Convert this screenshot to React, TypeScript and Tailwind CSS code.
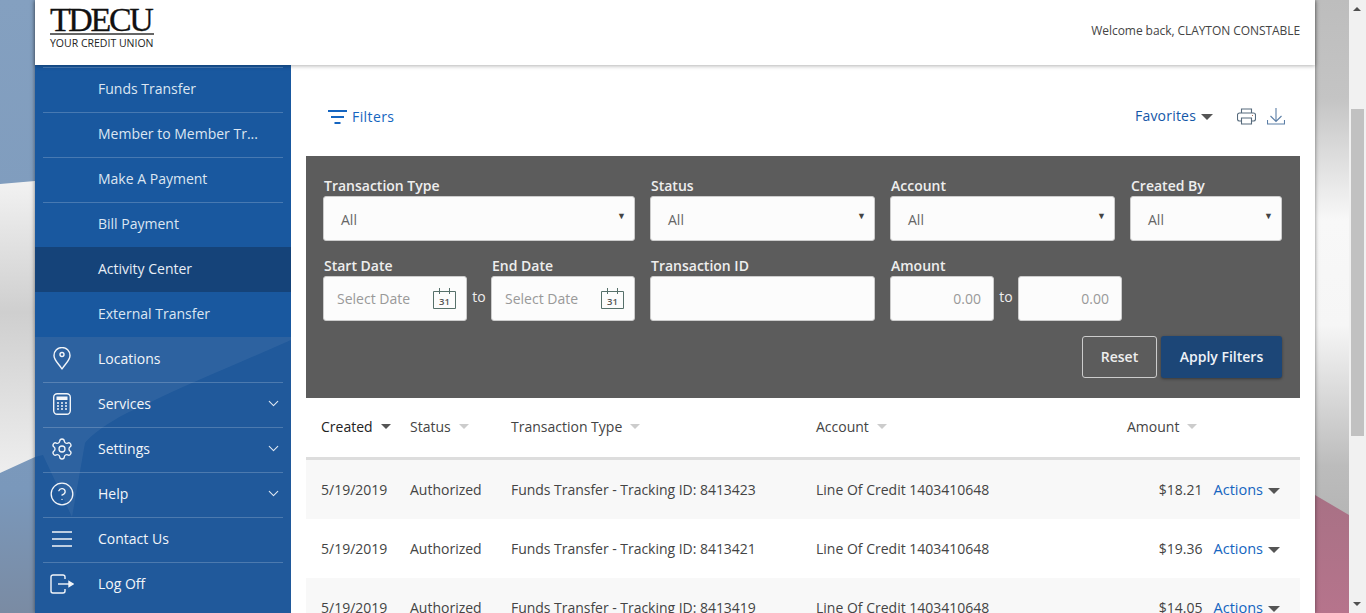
import { ChevronDown, Settings, CircleHelp } from "lucide-react";

const subItems = ["Funds Transfer", "Member to Member Tr...", "Make A Payment", "Bill Payment", "Activity Center", "External Transfer"];

const rows = [
    { id: "8413423", amount: "$18.21" },
    { id: "8413421", amount: "$19.36" },
    { id: "8413419", amount: "$14.05" },
];

function Caret({ className = "border-t-[#555]" }: { className?: string }) {
    return <span className={`inline-block h-0 w-0 border-x-[5.5px] border-t-[5.5px] border-x-transparent ${className}`} />;
}

function SelectBox({ width }: { width: string }) {
    return (
        <div className={`flex h-[45px] items-center justify-between rounded-[3px] border border-[#ccc] bg-[#fcfcfc] pl-[17px] pr-[8px] text-[14px] text-[#666] ${width}`}>
            <span className="mt-[1px]">All</span>
            <span className="mb-[5px] text-[9px] text-[#444]">▼</span>
        </div>
    );
}

function CalendarIcon() {
    return (
        <svg width="24" height="22" viewBox="0 0 24 22" fill="none">
            <path d="M0.500 3.500H22.500V20.500H0.500Z" stroke="#56706a" strokeWidth="1" />
            <path d="M6.500 0V6M16.500 0V6" stroke="#56706a" strokeWidth="1" />
            <text x="11.500" y="16.500" textAnchor="middle" fontSize="9.500" fontWeight="600" fill="#555" fontFamily="Open Sans, sans-serif">31</text>
        </svg>
    );
}

function DateBox() {
    return (
        <div className="flex h-[45px] w-[144px] items-center justify-between rounded-[3px] border border-[#ccc] bg-[#fcfcfc] pl-[13px] pr-[9px] text-[14px] text-[#999]">
            <span>Select Date</span>
            <CalendarIcon />
        </div>
    );
}

function AmountBox() {
    return (
        <div className="flex h-[45px] w-[104px] items-center justify-end rounded-[3px] border border-[#ccc] bg-[#fcfcfc] pr-[12px] text-[14px] text-[#999]">
            0.00
        </div>
    );
}

function Field({ label, children }: { label: string; children: React.ReactNode }) {
    return (
        <div className="flex flex-col">
            <label className="h-[20px] pl-px text-[14px] font-semibold leading-[20px] text-[#eee]">{label}</label>
            {children}
        </div>
    );
}

function NavRow({ icon, label, chevron }: { icon: React.ReactNode; label: string; chevron?: boolean }) {
    return (
        <div className="mx-[8px] flex h-[45px] items-center border-b border-[#ffffff33] pb-[3px] last:border-b-0 last:pb-[4px]">
            <span className="flex w-[38px] shrink-0 justify-center">{icon}</span>
            <span className="ml-[17px] flex-1 text-[14px] font-medium text-[#f2f5f9]">{label}</span>
            {chevron && <ChevronDown size={17} strokeWidth={1.5} className="mr-[1px] text-[#dfe8f3]" />}
        </div>
    );
}

const iconStroke = "#f2f5f9";

export default function App() {
    return (
        <div className="relative flex h-[613px] w-[1366px] overflow-hidden font-['Open_Sans',sans-serif]">
            {/* backdrop */}
            <svg className="absolute inset-0 h-full w-full" viewBox="0 0 1366 613" preserveAspectRatio="none">
                <defs>
                    <linearGradient id="left" x1="0" y1="0" x2="0" y2="1">
                        <stop offset="0" stopColor="#84a0c0" />
                        <stop offset="0.8" stopColor="#7a98bb" />
                        <stop offset="1" stopColor="#7a8ba3" />
                    </linearGradient>
                    <linearGradient id="band" x1="0" y1="0" x2="0" y2="1">
                        <stop offset="0" stopColor="#f2f2f2" />
                        <stop offset="0.45" stopColor="#cfcfcf" />
                        <stop offset="1" stopColor="#eeeeee" />
                    </linearGradient>
                    <linearGradient id="silk" x1="0" y1="0" x2="0" y2="1">
                        <stop offset="0" stopColor="#bdbdbd" />
                        <stop offset="0.16" stopColor="#c4c4c4" />
                        <stop offset="0.36" stopColor="#f8f8f8" />
                        <stop offset="0.53" stopColor="#f6f6f6" />
                        <stop offset="0.76" stopColor="#bcbcbc" />
                        <stop offset="1" stopColor="#a8a8a8" />
                    </linearGradient>
                    <linearGradient id="pink" x1="0" y1="0" x2="0" y2="1">
                        <stop offset="0" stopColor="#a87185" />
                        <stop offset="1" stopColor="#b6748c" />
                    </linearGradient>
                </defs>
                <rect width="40" height="613" fill="url(#left)" />
                <path d="M0 184L35 181V457L0 473Z" fill="url(#band)" />
                <rect x="1310" width="56" height="613" fill="url(#silk)" />
                <path d="M1315 495L1349 515V613H1315Z" fill="url(#pink)" />
            </svg>

            <div className="relative ml-[35px] flex h-[613px] w-[1280px] flex-col bg-white shadow-[0_0_4px_rgba(0,0,0,0.5)]">
                {/* header */}
                <header className="relative z-10 flex h-[65px] shrink-0 items-start justify-between bg-white pl-[15px] pr-[15px] shadow-[0_1px_4px_rgba(0,0,0,0.3)]">
                    <div className="flex w-[104px] flex-col pt-[8px] text-[#111]">
                        <div className="h-[25px] whitespace-nowrap font-['Liberation_Serif',serif] text-[34px] leading-[24px] tracking-[-2.4px] [-webkit-text-stroke:0.3px_#111]">TDECU</div>
                        <div className="h-[2px] bg-[#666]" />
                        <div className="whitespace-nowrap pt-[2px] text-[10.500px] leading-[13px] text-[#222]">YOUR CREDIT UNION</div>
                    </div>
                    <div className="pt-[21px] text-[12px] leading-[20px] tracking-[-0.065px] text-[#444]">Welcome back, CLAYTON CONSTABLE</div>
                </header>

                <div className="flex flex-1 overflow-hidden">
                    {/* sidebar */}
                    <aside className="relative w-[256px] shrink-0 overflow-hidden bg-[#20599b]">
                        <svg className="absolute inset-0 h-full w-full" viewBox="0 0 256 548" preserveAspectRatio="none">
                            <path d="M0 272H256V275C200 300 150 320 110 340C80 352 58 368 50 378L37 452L8 390L0 392Z" fill="#ffffff" fillOpacity="0.06" />
                        </svg>
                        <div className="relative bg-[#19589f] pt-[2px]">
                            {subItems.map((item) => (
                                <div
                                    key={item}
                                    className={`flex h-[45px] items-center border-t pb-[4px] text-[14px] font-medium ${
                                        item === "Activity Center"
                                            ? "border-transparent bg-[#154379] pl-[63px] text-[#e8eef6]"
                                            : item === "External Transfer"
                                              ? "border-transparent pl-[63px] text-[#dce6f2]"
                                              : "mx-[8px] border-[#ffffff33] pl-[55px] text-[#dce6f2]"
                                    }`}
                                >
                                    {item}
                                </div>
                            ))}
                        </div>
                        <div className="relative pt-px">
                            <NavRow
                                label="Locations"
                                icon={
                                    <svg width="18" height="23" viewBox="0 0 18 23" fill="none" stroke={iconStroke} strokeWidth="1.400">
                                        <path d="M9 22C6 17 1 13.500 1 8.500A8 8 0 0 1 17 8.500C17 13.500 12 17 9 22Z" strokeLinejoin="round" />
                                        <circle cx="9" cy="7.500" r="2" />
                                    </svg>
                                }
                            />
                            <NavRow
                                label="Services"
                                chevron
                                icon={
                                    <svg width="18" height="22" viewBox="0 0 18 22" fill="none">
                                        <rect x="0.700" y="0.700" width="16.600" height="20.600" rx="3.500" stroke={iconStroke} strokeWidth="1.400" />
                                        <rect x="3.500" y="3.500" width="11" height="3.500" fill={iconStroke} />
                                        <path d="M4 10H6M8 10H10M12 10H14M4 13H6M8 13H10M12 13H14M4 16H6M8 16H10M12 16H14" stroke={iconStroke} strokeWidth="1.600" />
                                    </svg>
                                }
                            />
                            <NavRow label="Settings" chevron icon={<Settings size={24} strokeWidth={1.3} className="text-[#f2f5f9]" />} />
                            <NavRow label="Help" chevron icon={<CircleHelp size={26} strokeWidth={1.2} className="text-[#f2f5f9]" />} />
                            <NavRow
                                label="Contact Us"
                                icon={
                                    <svg width="20" height="16" viewBox="0 0 20 16" fill="none" stroke={iconStroke} strokeWidth="1.400">
                                        <path d="M0 1H20M0 8H20M0 15H20" />
                                    </svg>
                                }
                            />
                            <NavRow
                                label="Log Off"
                                icon={
                                    <svg width="24" height="20" viewBox="0 0 24 20" fill="none" stroke={iconStroke} strokeWidth="1.400">
                                        <path d="M15 5V3a2 2 0 0 0-2-2H3a2 2 0 0 0-2 2v14a2 2 0 0 0 2 2h10a2 2 0 0 0 2-2v-2" />
                                        <path d="M8 10H20" />
                                        <path d="M19 7.500L23 10L19 12.500Z" fill={iconStroke} />
                                    </svg>
                                }
                            />
                        </div>
                    </aside>

                    {/* content */}
                    <main className="flex min-w-0 flex-1 flex-col px-[15px]">
                        <div className="flex h-[91px] shrink-0 items-center justify-between pt-[12px]">
                            <div className="ml-[22px] flex items-center gap-[5px] text-[14px] font-medium tracking-[0.4px] text-[#1565c0]">
                                <svg width="19" height="14" viewBox="0 0 19 14" fill="none" stroke="#1565c0" strokeWidth="2">
                                    <path d="M0 1H19M3 7H16M6.500 13H12.500" />
                                </svg>
                                Filters
                            </div>
                            <div className="flex items-center text-[14px] font-medium tracking-[0.2px] text-[#1457a8]">
                                <span className="mb-[2px]">Favorites</span>
                                <span className="ml-[5px] h-0 w-0 border-x-[6px] border-t-[6px] border-x-transparent border-t-[#555]" />
                                <svg width="19" height="17" viewBox="0 0 19 17" fill="none" stroke="#566a7c" strokeWidth="1.100" className="ml-[24px]">
                                    <path d="M4.500 5V1H14.500V5" />
                                    <path d="M4.500 13H2.500A2 2 0 0 1 0.500 11V7A2 2 0 0 1 2.500 5H16.500A2 2 0 0 1 18.500 7V11A2 2 0 0 1 16.500 13H14.500" />
                                    <path d="M4.500 10H14.500V16H4.500Z" />
                                    <path d="M15 7.500H16" stroke="#b0705a" />
                                </svg>
                                <svg width="18" height="17" viewBox="0 0 18 17" fill="none" stroke="#5b7ea6" strokeWidth="1.100" className="ml-[11px] mr-[15px]">
                                    <path d="M9 0V13M3.500 8L9 13.500L14.500 8" />
                                    <path d="M0.500 12V16H17.500V12" />
                                </svg>
                            </div>
                        </div>

                        <section className="flex h-[242px] shrink-0 flex-col bg-[#5c5c5c] pl-[17px] pr-[18px] pt-[20px]">
                            <div className="flex gap-[15px]">
                                <Field label="Transaction Type"><SelectBox width="w-[312px]" /></Field>
                                <Field label="Status"><SelectBox width="w-[225px]" /></Field>
                                <Field label="Account"><SelectBox width="w-[225px]" /></Field>
                                <Field label="Created By"><SelectBox width="w-[152px]" /></Field>
                            </div>
                            <div className="mt-[15px] flex gap-[15px]">
                                <div className="flex items-end">
                                    <Field label="Start Date"><DateBox /></Field>
                                    <span className="w-[24px] pb-[14px] text-center text-[14px] text-[#eee]">to</span>
                                    <Field label="End Date"><DateBox /></Field>
                                </div>
                                <Field label="Transaction ID"><div className="h-[45px] w-[225px] rounded-[3px] border border-[#ccc] bg-[#fcfcfc]" /></Field>
                                <div className="flex items-end">
                                    <Field label="Amount"><AmountBox /></Field>
                                    <span className="w-[24px] pb-[14px] text-center text-[14px] text-[#eee]">to</span>
                                    <AmountBox />
                                </div>
                            </div>
                            <div className="mt-[15px] flex justify-end gap-[4px]">
                                <button className="h-[42px] w-[75px] rounded-[3px] border border-[#ccc] pb-[2px] text-[14px] font-semibold text-[#eee]">Reset</button>
                                <button className="h-[42px] w-[121px] rounded-[3px] bg-[#1c4677] pb-[2px] text-[14px] font-semibold text-[#eef2f7] shadow-[0_1px_3px_rgba(0,0,0,0.4)]">Apply Filters</button>
                            </div>
                        </section>

                        {/* table */}
                        <div className="flex h-[62px] shrink-0 items-center border-b-[3px] border-[#ddd] pb-[2px] text-[14px] text-[#444]">
                            <div className="flex w-[104px] items-center gap-[8px] pl-[15px] text-[#222]">Created <Caret /></div>
                            <div className="flex w-[101px] items-center gap-[8px]">Status <Caret className="border-t-[#ccc]" /></div>
                            <div className="flex w-[305px] items-center gap-[8px]">Transaction Type <Caret className="border-t-[#ccc]" /></div>
                            <div className="flex w-[311px] items-center gap-[8px]">Account <Caret className="border-t-[#ccc]" /></div>
                            <div className="flex items-center gap-[8px]">Amount <Caret className="border-t-[#ccc]" /></div>
                        </div>
                        {rows.map((row, i) => (
                            <div key={row.id} className={`flex h-[59px] shrink-0 items-center text-[14px] text-[#444] ${i % 2 === 0 ? "bg-[#f8f8f8]" : "bg-white"}`}>
                                <div className="w-[104px] pl-[15px]">5/19/2019</div>
                                <div className="w-[101px]">Authorized</div>
                                <div className="w-[305px] tracking-[-0.03px]">Funds Transfer - Tracking ID: {row.id}</div>
                                <div className="flex-1">Line Of Credit 1403410648</div>
                                <div className="text-right">{row.amount}</div>
                                <div className="ml-[11px] mr-[20px] flex items-center gap-[5px] text-[14.500px] text-[#1565c0]">
                                    Actions
                                    <span className="mt-[3px] h-0 w-0 border-x-[6.500px] border-t-[6px] border-x-transparent border-t-[#555]" />
                                </div>
                            </div>
                        ))}
                    </main>
                </div>
            </div>

            {/* scrollbar */}
            <div className="absolute right-0 top-0 h-[613px] w-[17px] bg-[#f1f1f1]">
                <span className="absolute left-[4px] top-[7px] h-0 w-0 border-x-[4px] border-b-[4px] border-x-transparent border-b-[#505050]" />
                <div className="absolute left-[2px] top-[109px] h-[327px] w-[13px] bg-[#c1c1c1]" />
                <span className="absolute left-[4px] bottom-[7px] h-0 w-0 border-x-[4px] border-t-[4px] border-x-transparent border-t-[#505050]" />
            </div>
        </div>
    );
}
